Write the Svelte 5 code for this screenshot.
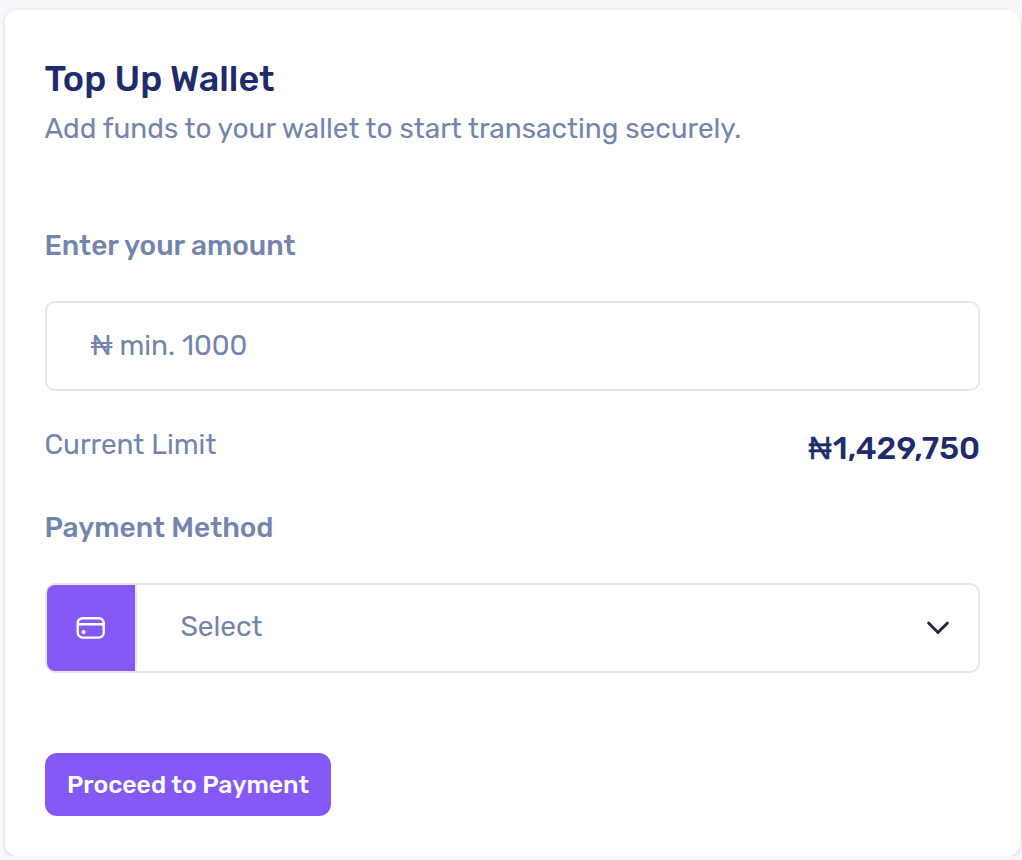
<script>
    let limit = 1429750;
    let amount = '';
    let method = 'Select';
</script>

<style>
    :global(body) {
        background: #f6f8fc;
        overflow: hidden;
    }
    .card {
        box-sizing: border-box;
        width: 1015px;
        height: 846px;
        margin: 10px 0 0 5px;
        padding: 47px 40px 40px;
        background: #fff;
        border-radius: 12px;
        box-shadow: 0 1px 4px rgba(35, 60, 90, 0.18);
        font-family: Rubik, Roboto, 'Liberation Sans', sans-serif;
        font-size: 28px;
        line-height: 34px;
        text-indent: -0.6px;
        color: #7385ae;
    }
    h1 {
        margin: 0;
        font-size: 36px;
        line-height: 44px;
        font-weight: 500;
        color: #202b6e;
        white-space: nowrap;
    }
    .subtitle {
        margin: 11px 0 0;
        white-space: nowrap;
    }
    .label {
        display: block;
        width: max-content;
        margin-top: 83px;
        font-weight: 500;
    }
    .label.method {
        margin-top: 44px;
    }
    .amount, .select {
        box-sizing: border-box;
        display: flex;
        align-items: center;
        width: 100%;
        height: 90px;
        margin-top: 38px;
        border: 2px solid #e4e8ed;
        border-radius: 10px;
        background: #fff;
        text-indent: -0.6px;
    }
    .amount {
        padding: 0 44px 2px;
        font: inherit;
        color: #7385ae;
        outline: none;
    }
    .amount::placeholder {
        color: #7385ae;
        opacity: 1;
    }
    .limit-row {
        display: flex;
        justify-content: space-between;
        align-items: flex-start;
        height: 39px;
        margin-top: 37px;
    }
    .value {
        margin-top: 1px;
        font-size: 32px;
        line-height: 38px;
        font-weight: 500;
        color: #202b6e;
    }
    .naira {
        margin-right: 1.2px;
        font-family: 'Liberation Sans', sans-serif;
        font-weight: 400;
        -webkit-text-stroke: 0.3px #202b6e;
    }
    .select {
        padding: 0;
        overflow: hidden;
        font: inherit;
        color: inherit;
        text-align: left;
    }
    .method-icon {
        display: flex;
        align-items: center;
        justify-content: center;
        box-sizing: border-box;
        flex: 0 0 90px;
        height: 86px;
        background: #8559f8;
        border-right: 2px solid #e4e8ed;
    }
    .choice {
        flex: 1;
        padding: 0 0 3px 44px;
    }
    .chevron {
        margin-right: 28px;
    }
    .proceed {
        display: block;
        width: 286px;
        height: 63px;
        margin-top: 80px;
        padding: 0;
        border: none;
        border-radius: 12px;
        background: #8559f8;
        color: #fff;
        font-family: inherit;
        font-size: 24.8px;
        font-weight: 500;
        white-space: nowrap;
    }
</style>

<div class="card">
    <h1>Top Up Wallet</h1>
    <p class="subtitle">Add funds to your wallet to start transacting securely.</p>

    <label class="label" for="amount">Enter your amount</label>
    <input class="amount" id="amount" type="text" placeholder="₦ min. 1000" bind:value={amount} />

    <div class="limit-row">
        <span class="limit">Current Limit</span>
        <span class="value"><span class="naira">₦</span>{limit.toLocaleString('en-US')}</span>
    </div>

    <label class="label method" for="method">Payment Method</label>
    <button class="select" id="method" type="button">
        <span class="method-icon">
            <svg width="30" height="24" viewBox="0 0 30 24" fill="none" stroke="#fff" stroke-width="2.4">
                <rect x="1.7" y="2.2" width="26" height="19.4" rx="5" />
                <path d="M2 8.3H28" />
                <circle cx="7.6" cy="16" r="2.1" fill="#fff" stroke="none" />
            </svg>
        </span>
        <span class="choice">{method}</span>
        <svg class="chevron" width="24" height="16" viewBox="0 0 24 16" fill="none" stroke="#212b3b" stroke-width="2.9" stroke-linecap="round" stroke-linejoin="round">
            <path d="M2.6 3L12 12.5L21.4 3" />
        </svg>
    </button>

    <button class="proceed" type="button">Proceed to Payment</button>
</div>
